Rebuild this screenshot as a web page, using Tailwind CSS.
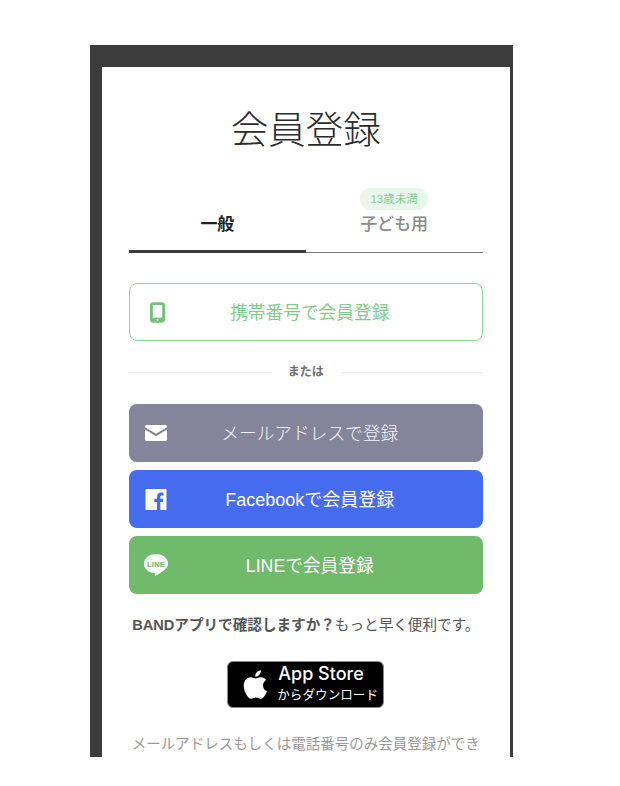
<!DOCTYPE html>
<html lang="ja">
  <head>
    <meta charset="UTF-8" />
    <title>会員登録</title>
    <script src="https://cdn.jsdelivr.net/npm/@tailwindcss/browser@4"></script>
  </head>
  <body class="bg-white h-[786px] overflow-hidden font-['Liberation_Sans','Noto_Sans_CJK_JP',sans-serif]">
    <div class="ml-[90px] pt-[45px] w-[423px]">
      <!-- frame -->
      <div class="bg-[#3c3c3c] h-[712px] pt-[22px] pl-[11.5px] pr-[3px] overflow-hidden">
        <div class="bg-white h-[690px] px-[27.5px] overflow-hidden">
          <h1 class="text-center text-[37.5px] leading-[50px] text-[#2b2b2b] font-light mt-[38px]">会員登録</h1>

          <!-- tabs -->
          <div class="flex mt-[33px] h-[65px] border-b border-[#777]">
            <div class="w-1/2 flex flex-col items-center justify-end border-b-[3px] border-[#3c3c3c] -mb-px pb-[13px]">
              <span class="text-[17px] leading-[24px] font-bold text-[#222]">一般</span>
            </div>
            <div class="w-1/2 flex flex-col items-center">
              <span class="h-[22px] px-[10px] rounded-full bg-[#e9f6ea] text-[#84d08a] text-[11.5px] leading-[22px]">13歳未満</span>
              <span class="text-[17px] leading-[24px] font-medium text-[#8a8a8a] mt-[3px]">子ども用</span>
            </div>
          </div>

          <!-- phone -->
          <a class="mt-[30px] relative flex items-center justify-center h-[58px] pl-2 pt-[2px] rounded-lg border border-[#8ed695] text-[#7fce87] text-[17.7px]">
            <svg class="absolute left-[20px] top-[18px]" width="15" height="21" viewBox="0 0 16 22"><rect width="16" height="22" rx="3.5" fill="#72c27b"/><rect x="3" y="3" width="10" height="13.5" fill="#fff"/><circle cx="8" cy="19" r="1" fill="#fff"/></svg>
            携帯番号で会員登録
          </a>

          <!-- divider -->
          <div class="flex items-center mt-[21px] h-[20px]">
            <div class="flex-1 h-px bg-[#ececec]"></div>
            <span class="w-[70px] text-center text-[12px] font-bold text-[#6f6f6f]">または</span>
            <div class="flex-1 h-px bg-[#ececec]"></div>
          </div>

          <!-- social -->
          <a class="mt-[22px] relative flex items-center justify-center h-[58px] pl-2 pt-[2px] rounded-lg bg-[#84849a] text-[#f4f4f6] text-[17.7px] font-light">
            <svg class="absolute left-[16px] top-[21px]" width="22" height="16" viewBox="0 0 22 16"><path d="M1.500 0h19A1.500 1.500 0 0 1 22 1.500v.7l-11 6.600L0 2.200v-.7A1.500 1.500 0 0 1 1.500 0z" fill="#fff"/><path d="M0 4.600l11 6.600 11-6.600v9.900a1.500 1.500 0 0 1-1.500 1.500h-19A1.500 1.500 0 0 1 0 14.500z" fill="#fff"/></svg>
            メールアドレスで登録
          </a>
          <a class="mt-[8px] relative flex items-center justify-center h-[58px] pl-2 pt-[2px] rounded-lg bg-[#456bee] text-white text-[18px]">
            <svg class="absolute left-[16px] top-[19px]" width="22" height="21" viewBox="0 0 21 21"><path d="M0 0h21v21h-6.200v-8h2.700l.4-3.200h-3.100V8c0-.9.3-1.500 1.600-1.500h1.600V3.600c-.3 0-1.300-.1-2.400-.1-2.400 0-4.100 1.500-4.100 4.200v2.100H8.800V13h2.700v8H0z" fill="#fff"/></svg>
            Facebookで会員登録
          </a>
          <a class="mt-[8px] relative flex items-center justify-center h-[58px] pl-2 pt-[2px] rounded-lg bg-[#70ba6b] text-white text-[17.7px]">
            <svg class="absolute left-[15px] top-[18px]" width="24" height="23" viewBox="0 0 24 23"><path d="M12 0C5.400 0 0 4.100 0 9.700c0 5 4.200 8.700 10 9.400.7.100.9.600.8 1.500-.1.800.2 1.300 1 .9 2-1 8-4.500 10.200-7.300C23.300 12.700 24 11.200 24 9.700 24 4.100 18.600 0 12 0z" fill="#fff"/><text x="12" y="12.600" text-anchor="middle" font-size="8" font-weight="700" fill="#70ba6b" font-family="Liberation Sans, sans-serif">LINE</text></svg>
            LINEで会員登録
          </a>

          <p class="mt-[20px] text-center text-[14.6px] leading-[22px] text-[#555] whitespace-nowrap"><b class="font-bold">BANDアプリで確認しますか？</b>もっと早く便利です。</p>

          <!-- app store -->
          <div class="mt-[25px] mx-auto w-[157px] h-[47px] rounded-md bg-black border border-[#888] flex items-center">
            <svg class="ml-[12px]" width="28" height="33" viewBox="0 0 26 31"><path d="M21.500 16.400c0-3.400 2.800-5 2.900-5.100-1.600-2.300-4-2.600-4.900-2.600-2.100-.2-4.100 1.200-5.100 1.200-1.100 0-2.700-1.200-4.400-1.200-2.300 0-4.400 1.300-5.500 3.300-2.400 4.100-.6 10.200 1.700 13.500 1.100 1.600 2.500 3.500 4.200 3.400 1.700-.1 2.300-1.100 4.400-1.100 2 0 2.600 1.100 4.400 1.100 1.800 0 3-1.600 4.100-3.300 1.300-1.900 1.800-3.700 1.900-3.800-.1 0-3.700-1.400-3.700-5.400zM18.100 6.300c.9-1.100 1.500-2.700 1.400-4.300-1.300.1-3 .9-3.900 2-.8 1-1.600 2.600-1.400 4.100 1.500.1 3-.7 3.900-1.800z" fill="#fff"/></svg>
            <div class="ml-[10px] flex flex-col text-white">
              <span class="text-[18px] leading-[16px] mb-[5px] font-medium font-['Inter',sans-serif]">App Store</span>
              <span class="text-[12.6px] leading-[16px] -ml-[1px] whitespace-nowrap">からダウンロード</span>
            </div>
          </div>

          <p class="mt-[25px] text-center text-[14.5px] leading-[22px] text-[#999] whitespace-nowrap">メールアドレスもしくは電話番号のみ会員登録ができ</p>
        </div>
      </div>
    </div>
  </body>
</html>
